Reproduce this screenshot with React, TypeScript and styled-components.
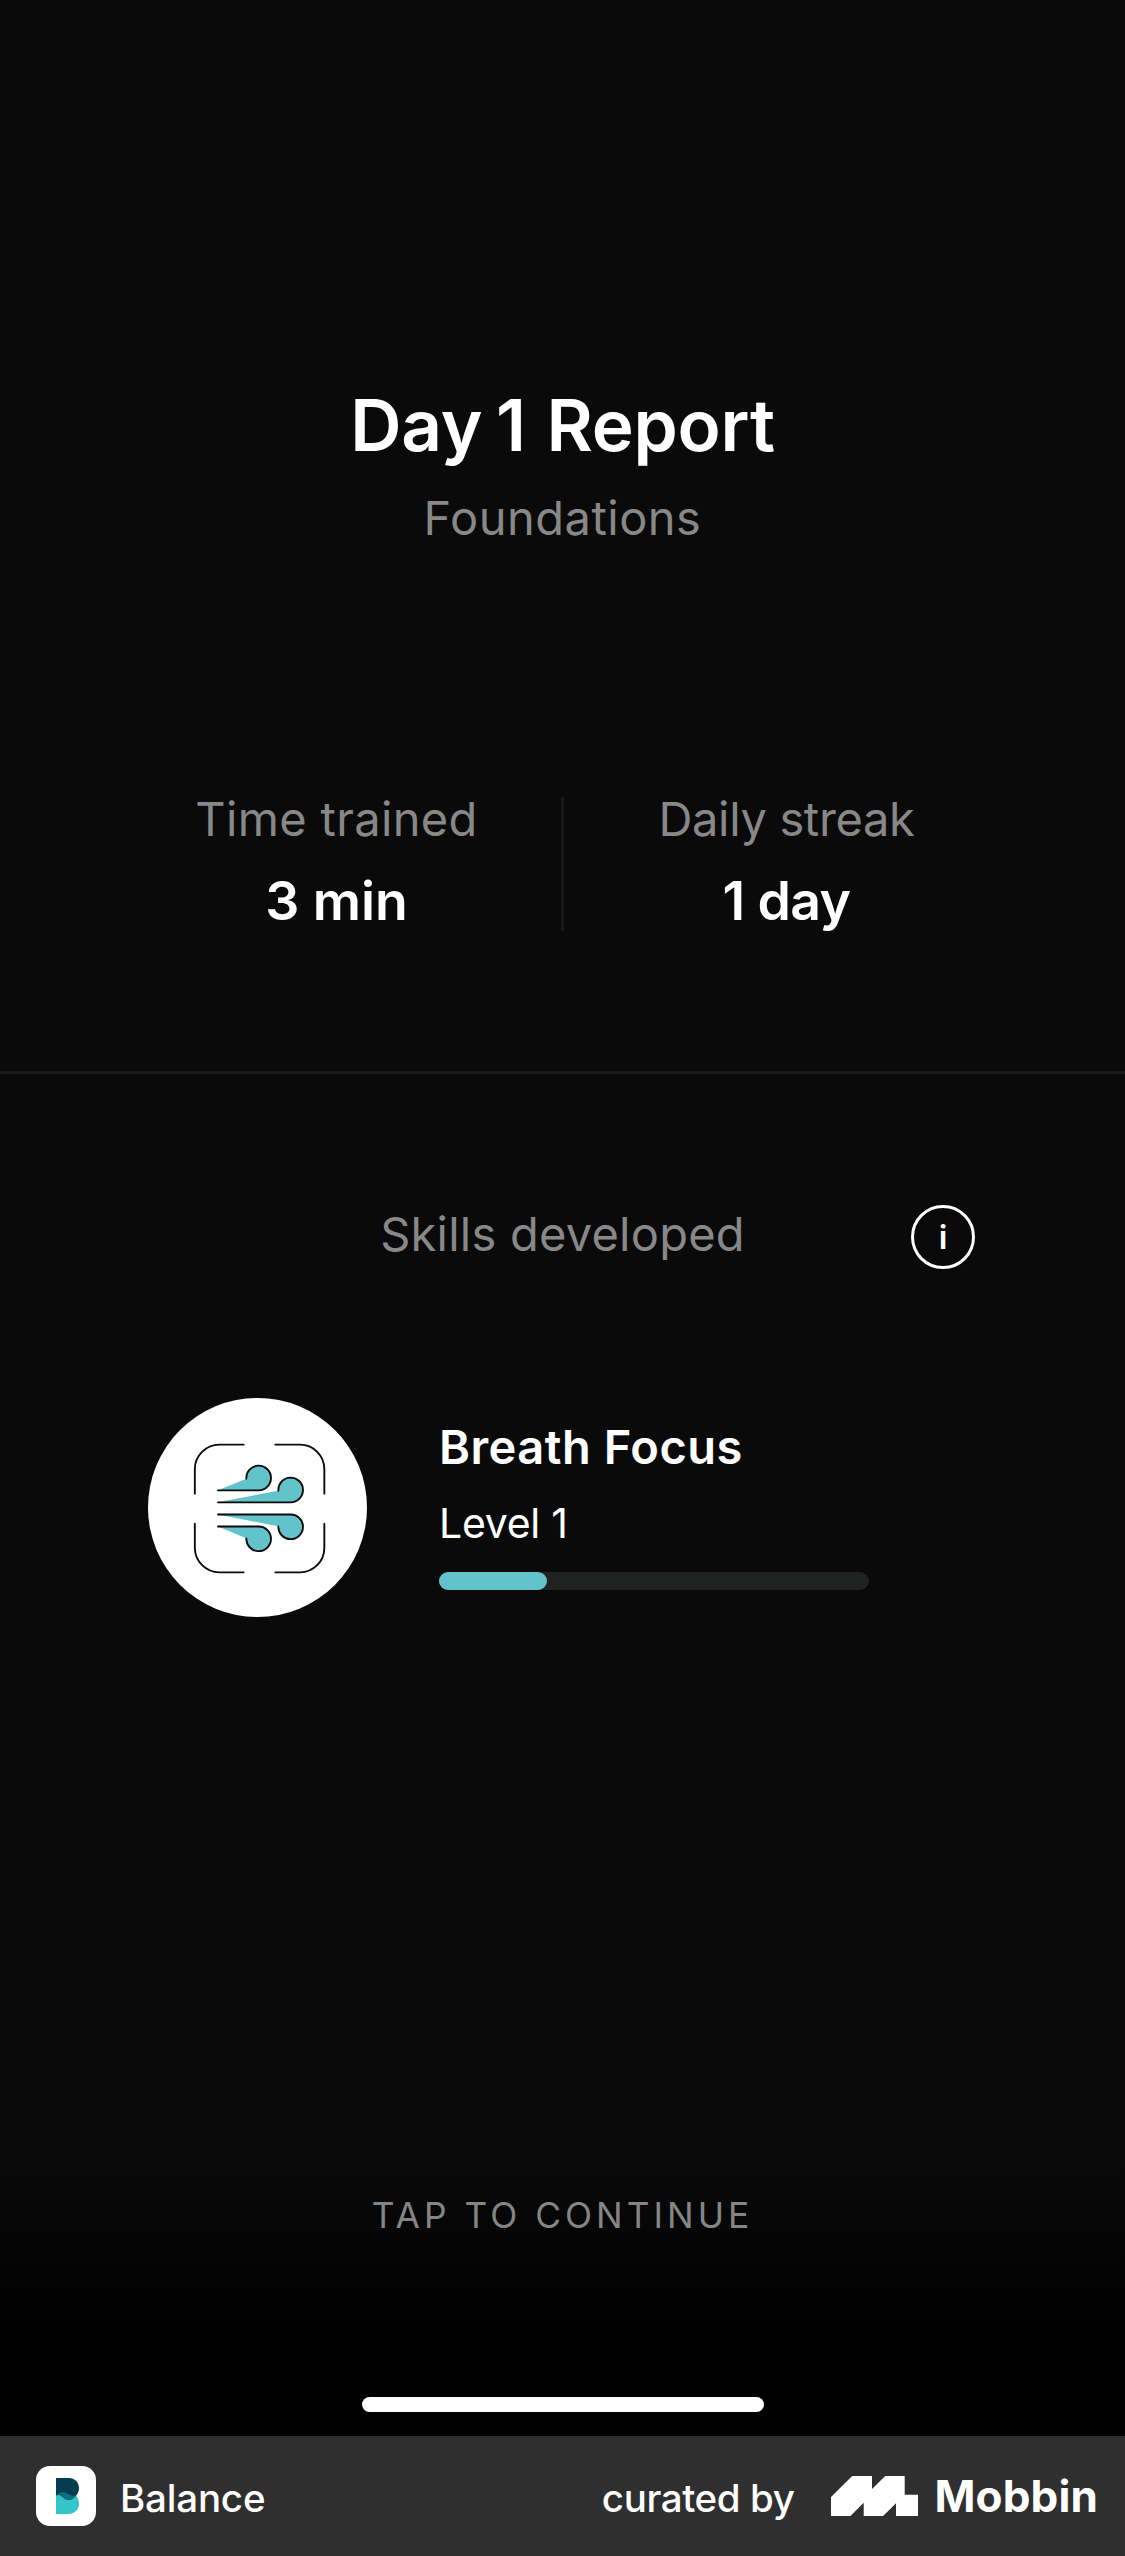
import React from "react";
import styled, { createGlobalStyle } from "styled-components";

const GlobalStyle = createGlobalStyle`
  * { box-sizing: border-box; }
  body {
    margin: 0;
    background: #0a0a0a;
    font-family: Inter, "Liberation Sans", sans-serif;
    color: #ffffff;
  }
`;

const Page = styled.div`
  display: flex;
  flex-direction: column;
  width: 1125px;
  height: 2556px;
`;

const Screen = styled.main`
  display: flex;
  flex-direction: column;
  height: 2436px;
  background: linear-gradient(180deg, #0a0a0a 2145px, #000000 2345px);
`;

const Header = styled.header`
  display: flex;
  flex-direction: column;
  align-items: center;
  padding-top: 380px;
`;

const Title = styled.h1`
  margin: 0;
  font-size: 71px;
  line-height: 90px;
  font-weight: 600;
  letter-spacing: -0.2px;
`;

const DayNumber = styled.span`
  margin: 0 3px 0 -4px;
`;

const Subtitle = styled.p`
  margin: 18px 0 0;
  font-size: 47px;
  line-height: 60px;
  letter-spacing: 0.5px;
  color: #888888;
`;

const Stats = styled.section`
  display: grid;
  grid-template-columns: 1fr 3px 1fr;
  margin-top: 249px;
  padding: 0 112px;
  height: 134px;
`;

const Stat = styled.div<{ $inset?: number }>`
  display: flex;
  flex-direction: column;
  align-items: center;
  padding-right: ${(p) => p.$inset ?? 0}px;
`;

const StatLabel = styled.span<{ $tracking: number }>`
  font-size: 47px;
  line-height: 44px;
  letter-spacing: ${(p) => p.$tracking}px;
  color: #888888;
`;

const StatValue = styled.span<{ $tracking: number }>`
  margin-top: 30px;
  font-size: 53.6px;
  line-height: 60px;
  font-weight: 600;
  letter-spacing: ${(p) => p.$tracking}px;
`;

const StatDivider = styled.div`
  background: #1a1a1a;
`;

const Skills = styled.section`
  margin-top: 140px;
  border-top: 3px solid #1a1a1a;
`;

const SkillsHeader = styled.div`
  display: grid;
  grid-template-columns: 64px 1fr 64px;
  padding: 131px 150px 0;
`;

const SkillsTitle = styled.h2`
  grid-column: 2;
  margin: 0;
  font-size: 47px;
  line-height: 58px;
  font-weight: 400;
  letter-spacing: 0.24px;
  text-align: center;
  color: #888888;
`;

const InfoButton = styled.button`
  display: flex;
  align-items: center;
  justify-content: center;
  width: 64px;
  height: 64px;
  padding: 0;
  border: 3px solid #ffffff;
  border-radius: 50%;
  background: none;
  color: #ffffff;
  font-family: inherit;
  font-size: 33px;
  line-height: 58px;
  font-weight: 600;
`;

const SkillRow = styled.article`
  display: flex;
  gap: 72px;
  margin-top: 129px;
  padding-left: 148px;
`;

const SkillInfo = styled.div`
  display: flex;
  flex-direction: column;
  width: 430px;
  padding-top: 24px;
`;

const SkillName = styled.h3`
  margin: 0;
  font-size: 47px;
  line-height: 50px;
  font-weight: 600;
  letter-spacing: 0.5px;
`;

const SkillLevel = styled.span`
  margin-top: 31px;
  font-size: 41px;
  line-height: 40px;
  letter-spacing: -0.27px;
`;

const Track = styled.div`
  margin-top: 29px;
  height: 18px;
  border-radius: 9px;
  background: #202222;
`;

const Fill = styled.div<{ $percent: number }>`
  width: ${(p) => p.$percent}%;
  height: 100%;
  border-radius: 9px;
  background: #63c3ca;
`;

const Continue = styled.p`
  margin: auto 0 0;
  font-size: 35.3px;
  line-height: 40px;
  letter-spacing: 4.04px;
  text-align: center;
  color: #858585;
`;

const HomeIndicator = styled.div`
  align-self: center;
  width: 402px;
  height: 15px;
  margin: 161px 0 24px;
  border-radius: 8px;
  background: #ffffff;
`;

const Footer = styled.footer`
  display: flex;
  align-items: center;
  justify-content: space-between;
  height: 120px;
  padding: 0 27px 0 36px;
  background: #2f2f2f;
`;

const Brand = styled.div`
  display: flex;
  align-items: center;
`;

const AppTile = styled.div`
  display: flex;
  width: 60px;
  height: 60px;
  margin-right: 24px;
  border-radius: 14px;
  background: #ffffff;
`;

const AppName = styled.span`
  padding-top: 3px;
  font-size: 38.5px;
  font-weight: 500;
  letter-spacing: -0.2px;
`;

const Curated = styled.span`
  padding-top: 3px;
  margin-right: 37px;
  font-size: 38.5px;
  font-weight: 500;
  letter-spacing: -0.4px;
`;

const Wordmark = styled.span`
  margin-left: 16px;
  font-size: 44px;
  font-weight: 700;
  letter-spacing: 0.13px;
`;

const BreathIcon = () => (
  <svg width="219" height="219" viewBox="54 54 657 657">
    <circle cx="382.5" cy="382.5" r="328.5" fill="#ffffff" />
    <g stroke="#0a0a0a" strokeWidth="5.6" strokeLinecap="round" fill="none">
      <path d="M341 194H268A74 74 0 0 0 194.500 268V341" />
      <path d="M436 194H510A73 73 0 0 1 583 267V341" />
      <path d="M194.500 431V504A74 74 0 0 0 268 577H341" />
      <path d="M436 577H510A73 73 0 0 0 583 504V431" />
    </g>
    <g stroke="#0a0a0a" strokeWidth="5.6" strokeLinecap="round" fill="#63c3ca">
      <path d="M264 331H386A37 37 0 1 0 349 296" />
      <path d="M264 367H482A37 37 0 1 0 445 332" />
      <path d="M264 403.500H482A37 37 0 1 1 445 439" />
      <path d="M264 439.500H386A37 37 0 1 1 349 475" />
    </g>
  </svg>
);

const BalanceIcon = () => (
  <svg width="60" height="60" viewBox="18 18 180 180">
    <path
      fill="#33c5c9"
      d="M78 107C92 92 104 95 114 101C122 106 130 108 138 107C144 113 147 122 147 132C147 149 133 162 115 162H78Z"
    />
    <path
      fill="#043c50"
      d="M78 54H116C134 54 147 67 147 84C147 94 143 102 138 107C128 120 114 124 102 115C95 109 88 101 78 107Z"
    />
    <path
      fill="#0b6f7e"
      d="M80 105C94 92 104 95 114 101C122 106 130 108 138 107C128 120 114 124 102 115C95 109 88 103 80 105Z"
    />
  </svg>
);

const MobbinIcon = () => (
  <svg width="87" height="40" viewBox="0 0 87 40">
    <path
      fill="#ffffff"
      d="M21.200 0H41V13L54.200 0H73.700V18.700H87V40H65V27.300L52.100 40H32.700V26.700L19.500 40H0V21Z"
    />
  </svg>
);

export default function App() {
  return (
    <>
      <GlobalStyle />
      <Page>
        <Screen>
          <Header>
            <Title>
              Day <DayNumber>1</DayNumber> Report
            </Title>
            <Subtitle>Foundations</Subtitle>
          </Header>
          <Stats>
            <Stat>
              <StatLabel $tracking={0.34}>Time trained</StatLabel>
              <StatValue $tracking={0}>3 min</StatValue>
            </Stat>
            <StatDivider />
            <Stat $inset={4}>
              <StatLabel $tracking={-0.34}>Daily streak</StatLabel>
              <StatValue $tracking={-0.6}>1 day</StatValue>
            </Stat>
          </Stats>
          <Skills>
            <SkillsHeader>
              <SkillsTitle>Skills developed</SkillsTitle>
              <InfoButton aria-label="About skills">i</InfoButton>
            </SkillsHeader>
            <SkillRow>
              <BreathIcon />
              <SkillInfo>
                <SkillName>Breath Focus</SkillName>
                <SkillLevel>Level 1</SkillLevel>
                <Track>
                  <Fill $percent={25} />
                </Track>
              </SkillInfo>
            </SkillRow>
          </Skills>
          <Continue>TAP TO CONTINUE</Continue>
          <HomeIndicator />
        </Screen>
        <Footer>
          <Brand>
            <AppTile>
              <BalanceIcon />
            </AppTile>
            <AppName>Balance</AppName>
          </Brand>
          <Brand>
            <Curated>curated by</Curated>
            <MobbinIcon />
            <Wordmark>Mobbin</Wordmark>
          </Brand>
        </Footer>
      </Page>
    </>
  );
}
